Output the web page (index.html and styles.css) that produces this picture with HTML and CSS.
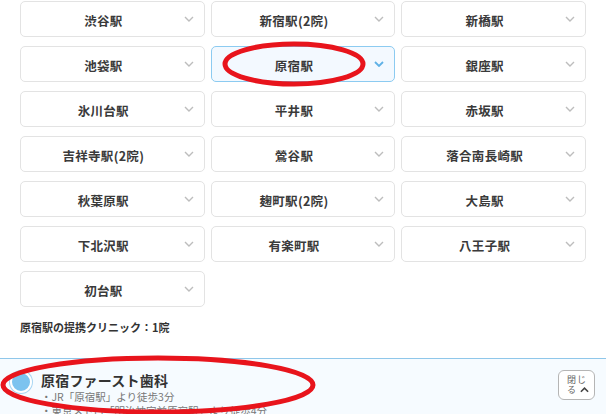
FILE: index.html
```html
<!DOCTYPE html>
<html lang="ja">
<head>
<meta charset="utf-8">
<link rel="stylesheet" href="styles.css">
</head>
<body>
<div class="page">
  <div class="grid">
    <div class="st">渋谷駅<svg class="chev" viewBox="0 0 10 6"><path d="M1 1l4 4 4-4"/></svg></div>
    <div class="st">新宿駅(2院)<svg class="chev" viewBox="0 0 10 6"><path d="M1 1l4 4 4-4"/></svg></div>
    <div class="st">新橋駅<svg class="chev" viewBox="0 0 10 6"><path d="M1 1l4 4 4-4"/></svg></div>
    <div class="st">池袋駅<svg class="chev" viewBox="0 0 10 6"><path d="M1 1l4 4 4-4"/></svg></div>
    <div class="st active">原宿駅<svg class="chev" viewBox="0 0 10 6"><path d="M1 1l4 4 4-4"/></svg></div>
    <div class="st">銀座駅<svg class="chev" viewBox="0 0 10 6"><path d="M1 1l4 4 4-4"/></svg></div>
    <div class="st">氷川台駅<svg class="chev" viewBox="0 0 10 6"><path d="M1 1l4 4 4-4"/></svg></div>
    <div class="st">平井駅<svg class="chev" viewBox="0 0 10 6"><path d="M1 1l4 4 4-4"/></svg></div>
    <div class="st">赤坂駅<svg class="chev" viewBox="0 0 10 6"><path d="M1 1l4 4 4-4"/></svg></div>
    <div class="st">吉祥寺駅(2院)<svg class="chev" viewBox="0 0 10 6"><path d="M1 1l4 4 4-4"/></svg></div>
    <div class="st">鶯谷駅<svg class="chev" viewBox="0 0 10 6"><path d="M1 1l4 4 4-4"/></svg></div>
    <div class="st">落合南長崎駅<svg class="chev" viewBox="0 0 10 6"><path d="M1 1l4 4 4-4"/></svg></div>
    <div class="st">秋葉原駅<svg class="chev" viewBox="0 0 10 6"><path d="M1 1l4 4 4-4"/></svg></div>
    <div class="st">麹町駅(2院)<svg class="chev" viewBox="0 0 10 6"><path d="M1 1l4 4 4-4"/></svg></div>
    <div class="st">大島駅<svg class="chev" viewBox="0 0 10 6"><path d="M1 1l4 4 4-4"/></svg></div>
    <div class="st">下北沢駅<svg class="chev" viewBox="0 0 10 6"><path d="M1 1l4 4 4-4"/></svg></div>
    <div class="st">有楽町駅<svg class="chev" viewBox="0 0 10 6"><path d="M1 1l4 4 4-4"/></svg></div>
    <div class="st">八王子駅<svg class="chev" viewBox="0 0 10 6"><path d="M1 1l4 4 4-4"/></svg></div>
    <div class="st">初台駅<svg class="chev" viewBox="0 0 10 6"><path d="M1 1l4 4 4-4"/></svg></div>
  </div>
  <p class="count">原宿駅の提携クリニック：1院</p>
  <div class="panel">
    <span class="radio"></span>
    <div class="info">
      <div class="name">原宿ファースト歯科</div>
      <div class="access">・JR「原宿駅」より徒歩3分</div>
      <div class="access">・東京メトロ「明治神宮前原宿駅」より徒歩4分</div>
    </div>
    <button class="close">
      <span class="close-l">閉じ</span>
      <span class="close-l">る<svg class="up" viewBox="0 0 10 6"><path d="M1 5l4-4 4 4"/></svg></span>
    </button>
  </div>
  <svg class="mark mark1" viewBox="0 0 150 48"><ellipse cx="75" cy="24" rx="69" ry="20"/></svg>
  <svg class="mark mark2" viewBox="0 0 330 70"><ellipse cx="160" cy="32" rx="155" ry="27"/></svg>
</div>
</body>
</html>
```

FILE: styles.css
```css
html, body {
  margin: 0;
  padding: 0;
  background: #fff;
}
body {
  font-family: "Noto Sans CJK JP", "Noto Sans", sans-serif;
  color: #333;
  width: 606px;
  height: 414px;
  overflow: hidden;
}
.page {
  position: relative;
  height: 414px;
  overflow: hidden;
}
.grid {
  display: grid;
  grid-template-columns: repeat(3, 1fr);
  column-gap: 6px;
  row-gap: 9px;
  padding: 1px 20px 0 20px;
}
.st {
  position: relative;
  box-sizing: border-box;
  height: 36px;
  border: 1px solid #e3e3e3;
  border-radius: 5px;
  background: #fff;
  display: flex;
  align-items: center;
  justify-content: center;
  padding: 3px 26px 0 8px;
  font-size: 12.5px;
  font-weight: 700;
  letter-spacing: 0.3px;
  color: #3a3a3a;
}
.chev {
  position: absolute;
  right: 10px;
  top: 14px;
  width: 10px;
  height: 6px;
  fill: none;
  stroke: #bdbdbd;
  stroke-width: 1.4;
}
.st.active {
  border-color: #8ccbf1;
  background: #f3f9ff;
}
.st.active .chev {
  stroke: #5fb1e6;
  stroke-width: 1.8;
}
.count {
  margin: 0;
  padding: 11px 20px 0;
  font-size: 11px;
  font-weight: 700;
  color: #333;
  height: 38px;
  box-sizing: border-box;
  line-height: 18px;
}
.panel {
  margin-top: 13px;
  border-top: 1px solid #8fc7ea;
  background: #f6fbff;
  height: 60px;
  display: flex;
  align-items: flex-start;
  padding: 11px 10px 0 10px;
  box-sizing: border-box;
}
.radio {
  width: 18px;
  height: 18px;
  margin-top: 1px;
  border-radius: 50%;
  background: #7cc3ef;
  border: 2px solid #fff;
  box-shadow: 0 0 0 1px #a9d6f3;
  flex: none;
}
.info {
  margin-left: 9px;
  flex: 1;
}
.name {
  font-size: 14px;
  font-weight: 700;
  line-height: 20px;
  color: #333;
  letter-spacing: 0.2px;
}
.access {
  font-size: 10.5px;
  line-height: 14px;
  color: #777;
}
.close {
  width: 37px;
  height: 30px;
  margin-top: 0;
  margin-right: 1px;
  border: 1px solid #b5b5b5;
  border-radius: 6px;
  background: #fff;
  display: flex;
  flex-direction: column;
  align-items: flex-start;
  justify-content: center;
  padding: 0 0 0 8px;
  font-family: "Noto Sans CJK JP", sans-serif;
  box-sizing: border-box;
  flex: none;
}
.close-l {
  display: flex;
  align-items: center;
  font-size: 9px;
  line-height: 10px;
  height: 10px;
  color: #666;
  letter-spacing: 1px;
}
.up {
  width: 9px;
  height: 6px;
  margin-left: 3px;
  fill: none;
  stroke: #444;
  stroke-width: 1.8;
}
.mark {
  position: absolute;
  fill: none;
  stroke: #e8141c;
  stroke-width: 5;
  overflow: visible;
}
.mark1 {
  left: 219px;
  top: 40px;
  width: 150px;
  height: 48px;
}
.mark2 {
  left: -2px;
  top: 353px;
  width: 330px;
  height: 70px;
}
```
